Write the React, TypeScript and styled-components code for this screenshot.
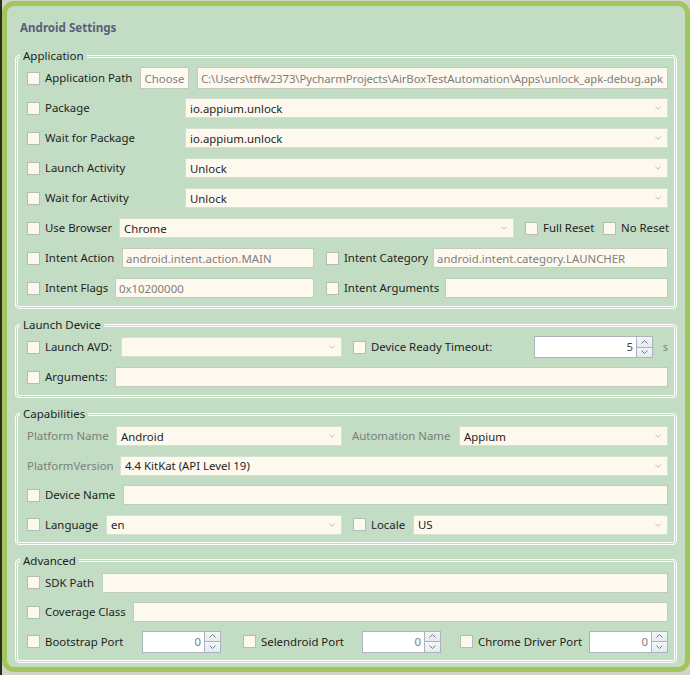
import React from 'react';
import styled, { createGlobalStyle } from 'styled-components';

const GlobalStyle = createGlobalStyle`
  html, body {
    margin: 0;
    padding: 0;
  }
  body {
    background: linear-gradient(to right, #2b2d22 0, #2b2d22 2px, #d2d3cb 2px);
    font-family: "Segoe UI", "Noto Sans", sans-serif;
    font-size: 11.4px;
    color: #1e1e1e;
    overflow: hidden;
  }
`;

const Window = styled.div`
  box-sizing: border-box;
  width: 688px;
  height: 671px;
  margin: 1px 0 0 2px;
  border: 5px solid #a2c55e;
  border-radius: 12px;
  background: #c3dcc4;
  padding: 14px 8px 0 8px;
`;

const Title = styled.div`
  margin: 0 0 12px 5px;
  font-size: 11.6px;
  line-height: 16px;
  font-weight: 700;
  color: #5a5f78;
`;

const Group = styled.fieldset`
  margin: 0 0 8px;
  padding: 0;
  min-width: 0;
  border: 3px double #ffffff;
  border-radius: 4px;
`;

const Legend = styled.legend`
  margin-left: 2px;
  padding: 0 3px;
  font-size: 11.5px;
  line-height: 16px;
`;

const Body = styled.div<{ $gap?: number; $pb?: number }>`
  display: flex;
  flex-direction: column;
  gap: ${p => p.$gap ?? 8}px;
  padding: 3px 6px ${p => p.$pb ?? 7}px 9px;
`;

const Row = styled.div`
  display: flex;
  align-items: center;
  height: 22px;
`;

const Check = styled.span<{ $ml?: number }>`
  box-sizing: border-box;
  flex: none;
  width: 13px;
  height: 13px;
  margin: 0 5px 0 ${p => p.$ml ?? 0}px;
  background: #fdf9ef;
  border: 1px solid #b4bcb4;
`;

const Label = styled.span<{ $w?: number; $ml?: number; $muted?: boolean }>`
  flex: none;
  width: ${p => (p.$w ? `${p.$w}px` : 'auto')};
  margin-left: ${p => p.$ml ?? 0}px;
  white-space: nowrap;
  line-height: 20px;
  color: ${p => (p.$muted ? '#7a7f7b' : '#1e1e1e')};
`;

const Button = styled.span`
  box-sizing: border-box;
  flex: none;
  width: 49px;
  height: 22px;
  margin-right: 8px;
  display: flex;
  align-items: center;
  justify-content: center;
  background: #fdfaf2;
  border: 1px solid #c2c9c2;
  color: #808080;
`;

const TextBox = styled.div<{ $w?: number; $muted?: boolean }>`
  box-sizing: border-box;
  height: 20px;
  ${p => (p.$w ? `width: ${p.$w}px; flex: none;` : 'flex: 1;')}
  min-width: 0;
  padding: 0 3px;
  display: flex;
  align-items: center;
  overflow: hidden;
  white-space: nowrap;
  background: #fdf9ef;
  border: 1px solid #c3cac1;
  color: ${p => (p.$muted ? '#7d7d7d' : '#1e1e1e')};
`;

const PathBox = styled(TextBox)`
  height: 22px;
  letter-spacing: -0.1px;
`;

const ComboBox = styled.div<{ $w?: number }>`
  box-sizing: border-box;
  height: 20px;
  ${p => (p.$w ? `width: ${p.$w}px; flex: none;` : 'flex: 1;')}
  min-width: 0;
  padding: 0 6px 0 4px;
  display: flex;
  align-items: center;
  justify-content: space-between;
  white-space: nowrap;
  background: #fdf9ef;
  border: 1px solid #d4e0d0;
  color: #1e1e1e;
`;

const Numeric = styled.div<{ $w: number }>`
  box-sizing: border-box;
  flex: none;
  width: ${p => p.$w}px;
  height: 22px;
  display: flex;
  background: #ffffff;
  border: 1px solid #aab4bf;
`;

const NumValue = styled.span<{ $dark?: boolean }>`
  flex: 1;
  padding-right: 3px;
  text-align: right;
  line-height: 20px;
  color: ${p => (p.$dark ? '#4a4a4a' : '#7d7d7d')};
`;

const Spinner = styled.div`
  flex: none;
  width: 15px;
  display: flex;
  flex-direction: column;
  border-left: 1px solid #aab4bf;
`;

const SpinButton = styled.span`
  flex: 1;
  display: flex;
  align-items: center;
  justify-content: center;
  background: linear-gradient(#f4f6f8, #e6eaee);
  & + & {
    border-top: 1px solid #aab4bf;
  }
`;

const Unit = styled.span`
  margin-left: 10px;
  font-size: 10px;
  color: #7a7f7b;
`;

const Chevron = ({ up }: { up?: boolean }) => (
  <svg width="7" height="4" viewBox="0 0 7 4">
    <path
      d={up ? 'M0.5 3.5 L3.5 0.5 L6.5 3.5' : 'M0.5 0.5 L3.5 3.5 L6.5 0.5'}
      fill="none"
      stroke="#6e7986"
      strokeWidth="1"
    />
  </svg>
);

const Combo = ({ value, w }: { value?: string; w?: number }) => (
  <ComboBox $w={w}>
    <span>{value}</span>
    <svg width="6" height="4" viewBox="0 0 6 4">
      <path d="M0.5 0.8 L3 3.2 L5.5 0.8" fill="none" stroke="#b4b4b0" strokeWidth="0.9" />
    </svg>
  </ComboBox>
);

const NumericUpDown = ({ value, w, dark }: { value: string; w: number; dark?: boolean }) => (
  <Numeric $w={w}>
    <NumValue $dark={dark}>{value}</NumValue>
    <Spinner>
      <SpinButton>
        <Chevron up />
      </SpinButton>
      <SpinButton>
        <Chevron />
      </SpinButton>
    </Spinner>
  </Numeric>
);

export default function App() {
  return (
    <>
      <GlobalStyle />
      <Window>
        <Title>Android Settings</Title>

        <Group>
          <Legend>Application</Legend>
          <Body>
            <Row>
              <Check />
              <Label $w={95}>Application Path</Label>
              <Button>Choose</Button>
              <PathBox $muted>C:\Users\tffw2373\PycharmProjects\AirBoxTestAutomation\Apps\unlock_apk-debug.apk</PathBox>
            </Row>
            <Row>
              <Check />
              <Label $w={140}>Package</Label>
              <Combo value="io.appium.unlock" />
            </Row>
            <Row>
              <Check />
              <Label $w={140}>Wait for Package</Label>
              <Combo value="io.appium.unlock" />
            </Row>
            <Row>
              <Check />
              <Label $w={140}>Launch Activity</Label>
              <Combo value="Unlock" />
            </Row>
            <Row>
              <Check />
              <Label $w={140}>Wait for Activity</Label>
              <Combo value="Unlock" />
            </Row>
            <Row>
              <Check />
              <Label $w={74}>Use Browser</Label>
              <Combo value="Chrome" w={395} />
              <Check $ml={11} />
              <Label $w={60}>Full Reset</Label>
              <Check />
              <Label>No Reset</Label>
            </Row>
            <Row>
              <Check />
              <Label $w={77}>Intent Action</Label>
              <TextBox $w={192} $muted>android.intent.action.MAIN</TextBox>
              <Check $ml={12} />
              <Label $w={89}>Intent Category</Label>
              <TextBox $muted>android.intent.category.LAUNCHER</TextBox>
            </Row>
            <Row>
              <Check />
              <Label $w={70}>Intent Flags</Label>
              <TextBox $w={199} $muted>0x10200000</TextBox>
              <Check $ml={12} />
              <Label $w={101}>Intent Arguments</Label>
              <TextBox />
            </Row>
          </Body>
        </Group>

        <Group>
          <Legend>Launch Device</Legend>
          <Body>
            <Row>
              <Check />
              <Label $w={76}>Launch AVD:</Label>
              <Combo w={221} />
              <Check $ml={11} />
              <Label $w={163}>Device Ready Timeout:</Label>
              <NumericUpDown value="5" w={119} dark />
              <Unit>s</Unit>
            </Row>
            <Row>
              <Check />
              <Label $w={70}>Arguments:</Label>
              <TextBox />
            </Row>
          </Body>
        </Group>

        <Group>
          <Legend>Capabilities</Legend>
          <Body $gap={7.5} $pb={6}>
            <Row>
              <Label $w={89} $muted>Platform Name</Label>
              <Combo value="Android" w={226} />
              <Label $w={107} $ml={10} $muted>Automation Name</Label>
              <Combo value="Appium" />
            </Row>
            <Row>
              <Label $w={93} $muted>PlatformVersion</Label>
              <Combo value="4.4 KitKat (API Level 19)" />
            </Row>
            <Row>
              <Check />
              <Label $w={78}>Device Name</Label>
              <TextBox />
            </Row>
            <Row>
              <Check />
              <Label $w={61}>Language</Label>
              <Combo value="en" w={236} />
              <Check $ml={11} />
              <Label $w={42}>Locale</Label>
              <Combo value="US" />
            </Row>
          </Body>
        </Group>

        <Group>
          <Legend>Advanced</Legend>
          <Body $gap={7.5}>
            <Row>
              <Check />
              <Label $w={57}>SDK Path</Label>
              <TextBox />
            </Row>
            <Row>
              <Check />
              <Label $w={88}>Coverage Class</Label>
              <TextBox />
            </Row>
            <Row>
              <Check />
              <Label $w={97}>Bootstrap Port</Label>
              <NumericUpDown value="0" w={79} />
              <Check $ml={22} />
              <Label $w={101}>Selendroid Port</Label>
              <NumericUpDown value="0" w={79} />
              <Check $ml={19} />
              <Label $w={111}>Chrome Driver Port</Label>
              <NumericUpDown value="0" w={79} />
            </Row>
          </Body>
        </Group>
      </Window>
    </>
  );
}
